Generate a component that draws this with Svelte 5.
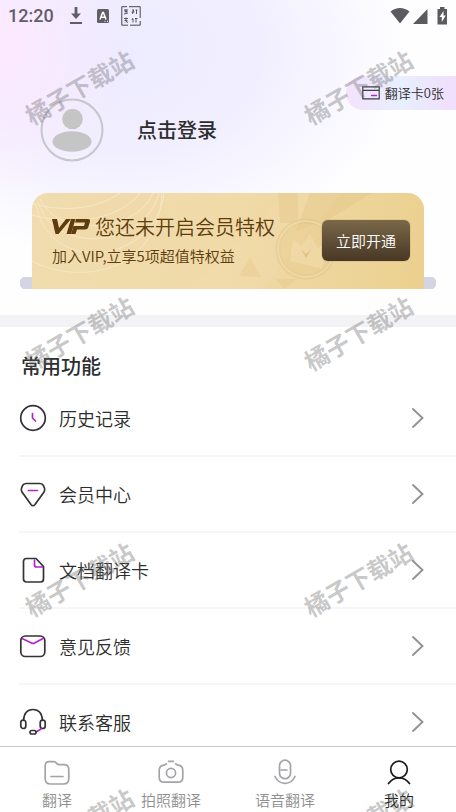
<script>
  const rows = [
    { id: 'history', label: '历史记录' },
    { id: 'member', label: '会员中心' },
    { id: 'document', label: '文档翻译卡' },
    { id: 'feedback', label: '意见反馈' },
    { id: 'service', label: '联系客服' }
  ];
  const tabs = [
    { id: 'translate', label: '翻译' },
    { id: 'photo', label: '拍照翻译' },
    { id: 'voice', label: '语音翻译' },
    { id: 'mine', label: '我的' }
  ];
  const marks = [0, 1, 2, 3, 4, 5, 6, 7];
  let active = $state('mine');
</script>

<div class="page">
  <main>
    <section class="top">
      <div class="status">
        <span class="time">12:20</span>
        <svg class="download" width="14" height="20" viewBox="0 0 14 20" aria-hidden="true">
          <path d="M7 1v9" stroke="#625d66" stroke-width="2.8" />
          <path d="M2 7.500h10L7 13z" fill="#625d66" />
          <path d="M1 17h12" stroke="#625d66" stroke-width="2" />
        </svg>
        <svg class="lang" width="12" height="14" viewBox="0 0 12 14" aria-hidden="true">
          <rect width="12" height="14" rx="1.500" fill="#625d66" />
          <path d="M3 10.500 5.600 3.500h.8L9 10.500M4 8.200h4" fill="none" stroke="#fff" stroke-width="1.500" />
          <path d="M7.500 12.300h1M10 12.300h1" stroke="#fff" stroke-width="1" />
        </svg>
        <svg class="seal" width="20" height="20" viewBox="0 0 20 20" fill="none" stroke="#4c4750" aria-hidden="true">
          <path d="M6 .7H.8v18.500H7M9 19.200h10.200V15M19.200 12V.7H8" stroke-width="1" />
          <path d="M3 4h4M5 3v4M3.500 5.500h3M3 8l4-1M11 4h2M10.500 6h3M12.500 4l-1 4M14.500 4h2M15.500 4v4M3 12.500h4M5 11.500v3M3.500 14.500h3M4 16.500l1-1 2 1M12 12l-1 2M12 13v3.500M14 12.500h2.500M15 12v4.500" stroke-width=".9" />
        </svg>
        <svg class="signals" width="58" height="18" viewBox="0 0 58 18" fill="#5c5a5e" aria-hidden="true">
          <path d="M.5 4.500C6-.2 14-.2 19.500 4.500L10 16.500z" />
          <path d="M37.500 2v15H23z" />
          <path fill-rule="evenodd" d="M50 0h4.500v2H57v15.500h-9.500V2H50zM53.500 4l-4 6h2.300v5l4-6.500h-2.300z" />
        </svg>
      </div>

      <div class="profile">
        <button class="login" type="button">
          <svg width="64" height="64" viewBox="0 0 64 64" aria-hidden="true">
            <circle cx="32" cy="32" r="30.500" fill="none" stroke="#c7c6ca" stroke-width="2" />
            <circle cx="32.500" cy="21" r="10.300" fill="#c5c5c6" />
            <ellipse cx="32" cy="43.500" rx="19.500" ry="10.300" fill="#c5c5c6" />
          </svg>
          <span>点击登录</span>
        </button>
        <button class="cards" type="button">
          <svg width="18" height="14" viewBox="0 0 18 14" fill="none" aria-hidden="true">
            <path d="M.8.8h16.400v12H.8zM.8 4.300h16.400" stroke="#403c46" stroke-width="1.200" />
            <path d="M9.500 9.500h5" stroke="#bb22d3" stroke-width="1.400" stroke-linecap="round" />
          </svg>
          <span>翻译卡0张</span>
        </button>
      </div>

      <div class="ledge">
        <div class="vip">
          <svg class="art" viewBox="0 0 392 96" preserveAspectRatio="xMidYMid slice" aria-hidden="true">
            <path d="M156 96 222 36 250 0h60L230 96z" fill="#f3ddb0" opacity=".35" />
            <path d="M278 0h62l-46 28-30 10zM246 0h20v30h-18z" fill="#dfc07d" opacity=".3" />
            <path d="M207 83 218 64 229 84zM244 86l8 10 14-10z" fill="#dfc07d" opacity=".25" />
            <circle cx="274" cy="56" r="28" fill="#e5c888" opacity=".35" stroke="#dbbb78" stroke-width="5" />
            <circle cx="274" cy="56" r="28" fill="none" stroke="#f6e4bd" stroke-width="2" opacity=".5" />
            <path d="M258 68l3-22 8 7 9-12 8 14 9-6-5 27z" fill="#f3dfb4" opacity=".5" />
            <path d="M269 56l5 5 6-6-6 10z" fill="#d9b974" opacity=".7" />
            <g fill="none" stroke="#f9edcf" stroke-width="1" opacity=".7">
              <path d="M0 10C30 20 65 16 88 0" />
              <path d="M0 22C45 35 90 24 108 0" />
              <path d="M8 6C25 45 105 40 121 0" />
              <path d="M6 8C20 62 112 57 127 0" />
              <path d="M4 12C18 84 124 70 132 0" />
              <path d="M0 68C45 92 126 82 130 0" />
            </g>
          </svg>
          <div class="copy">
            <div class="title">
              <svg width="38" height="16" viewBox="0 0 38 16" role="img" aria-label="VIP" fill="#5d3d0d">
                <path d="M0 0h5l2 9 7-9h5L6.500 15H3.500z" />
                <path d="M19 0h4.500l-4.500 15h-4.500z" />
                <path fill-rule="evenodd" d="M24 0h12q2.500 0 2 2.500l-1.500 5Q36 10.500 33 10.500h-8L23.500 15H19l2.500-8h10.500l1-3.500H23z" />
              </svg>
              <h1>您还未开启会员特权</h1>
            </div>
            <p>加入VIP,立享5项超值特权益</p>
          </div>
          <button class="open" type="button">立即开通</button>
        </div>
      </div>
    </section>

    <section class="features">
      <h2>常用功能</h2>
      <ul>
        {#each rows as row (row.id)}
          <li>
            <a href={`#${row.id}`}>
              <svg width="28" height="28" viewBox="0 0 28 28" fill="none" stroke="#343236" stroke-width="1.700" stroke-linecap="round" stroke-linejoin="round" aria-hidden="true">
                {#if row.id === 'history'}
                  <circle cx="14" cy="14" r="12.300" />
                  <path class="accent" d="M13.500 9.500V14l3 3" />
                {:else if row.id === 'member'}
                  <path d="M7 3.500h14q2.500 0 3.500 2.200l1 2.500q.8 2-.5 3.800L16 24.500q-2 2.500-4 0L3 12q-1.300-1.800-.5-3.800l1-2.500Q4.500 3.500 7 3.500z" />
                  <path class="accent" d="M9.500 10.500h9" />
                {:else if row.id === 'document'}
                  <path d="M7.500 2.500H17l7.500 8V23q0 3-3 3h-14q-3 0-3-3V5.500q0-3 3-3z" />
                  <path class="accent" d="M15.500 4v5q0 2 2 2h6" />
                {:else if row.id === 'feedback'}
                  <path class="accent" d="M3 6.500l9.500 4.500q1.500.8 3 0L24 6.500" />
                  <rect x="1.800" y="4" width="24" height="20.500" rx="4.500" />
                {:else}
                  <path d="M4.500 12.500C5 5 9 1.500 14 1.500S23 5 23.500 12.500" />
                  <rect x="1.800" y="12" width="5" height="8.500" rx="2.500" />
                  <rect x="21.200" y="12" width="5" height="8.500" rx="2.500" />
                  <path class="accent" d="M22 21l-5 3" />
                  <rect x="11" y="22.500" width="6" height="3.500" rx="1.700" />
                {/if}
              </svg>
              <span>{row.label}</span>
              <svg class="arrow" width="14" height="22" viewBox="0 0 14 22" fill="none" stroke="#929292" stroke-width="1.900" stroke-linecap="round" aria-hidden="true">
                <path d="M2 2l9.500 9L2 20" />
              </svg>
            </a>
          </li>
        {/each}
      </ul>
    </section>
  </main>

  <nav>
    {#each tabs as tab (tab.id)}
      <button type="button" class:active={active === tab.id} onclick={() => (active = tab.id)}>
        <svg width="28" height="28" viewBox="0 0 28 28" fill="none" stroke="currentColor" stroke-width="1.700" stroke-linecap="round" stroke-linejoin="round" aria-hidden="true">
          {#if tab.id === 'translate'}
            <path d="M6 2.700h4.500q2 0 3 1.500t3 1.500H21q4.800 0 4.800 4.800v9.300q0 5.200-5.200 5.200H7.400q-5.200 0-5.200-5.200V7q0-4.300 3.800-4.300z" />
            <path d="M8 17.500h12" />
          {:else if tab.id === 'photo'}
            <path d="M9.500 4.800 7 6.200Q2.200 6.600 2.200 11.500v6.700q0 5 5 5h13.600q5 0 5-5v-6.700q0-4.900-4.800-5.300l-2.500-1.400M11.500 2.300h5" />
            <circle cx="14" cy="14" r="4.600" />
          {:else if tab.id === 'voice'}
            <rect x="8.500" y="1.200" width="11" height="18.500" rx="5.500" />
            <path d="M10 11h6M4 17.500q3.200 6.800 10 6.800t10-6.800" />
          {:else}
            <circle cx="14" cy="10.500" r="8.300" />
            <path d="M3.500 24.500c3-4.200 6.500-5.700 10.500-5.700s7.500 1.500 10.500 5.700" />
          {/if}
        </svg>
        <span>{tab.label}</span>
      </button>
    {/each}
  </nav>

  <div class="marks" aria-hidden="true">
    {#each marks as mark (mark)}
      <span>橘子下载站</span>
    {/each}
  </div>
</div>

<style>
  .page {
    position: relative;
    display: flex;
    flex-direction: column;
    height: 100vh;
    overflow: hidden;
    background: #fff;
    color: #2d2d2d;
    font-family: "Noto Sans CJK SC", sans-serif;
    font-weight: 350;
  }
  button {
    margin: 0;
    padding: 0;
    border: 0;
    background: none;
    color: inherit;
    font-family: inherit;
    font-weight: inherit;
    cursor: pointer;
  }
  svg { flex: none; display: block; }
  h1, h2, p, ul { margin: 0; padding: 0; }
  main {
    flex: 1;
    min-height: 0;
    overflow-y: auto;
    scrollbar-width: none;
  }
  .top {
    padding-bottom: 26px;
    border-bottom: 12px solid #f3f3f6;
    background:
      radial-gradient(ellipse 130px 150px at 0 50px, #fce8ff 0%, #fce8ff00 100%),
      radial-gradient(ellipse 290px 210px at 120px 50px, #edebff 0%, #f0eeff 45%, #f5f4ff00 100%),
      #fefeff;
  }
  .status {
    display: flex;
    align-items: center;
    height: 32px;
    padding: 0 8px;
    color: #625d66;
  }
  .time {
    font: 500 18px/32px Roboto, sans-serif;
  }
  .download { margin-left: 15px; }
  .lang { margin-left: 14px; }
  .seal { margin-left: 12px; }
  .signals { margin-left: auto; }
  .profile {
    display: flex;
    align-items: flex-start;
    justify-content: space-between;
    height: 117px;
    padding-top: 44px;
  }
  .login {
    display: flex;
    align-items: center;
    gap: 33px;
    margin: 22px 0 0 40px;
    font-size: 20px;
    font-weight: 500;
    line-height: 28px;
  }
  .cards {
    display: flex;
    align-items: center;
    gap: 5px;
    height: 34px;
    padding: 0 12px 0 16px;
    border-radius: 17px 0 0 17px;
    background: linear-gradient(90deg, #f4e2fd, #e8effd 50%, #f0defd);
    font-size: 13px;
    line-height: 20px;
  }
  .ledge {
    padding: 0 12px;
    margin: 0 20px;
    background:
      radial-gradient(circle at 6px 6px, #d4d4e2 6px, transparent 7px) left bottom / 12px 12px no-repeat,
      radial-gradient(circle at 6px 6px, #d4d4e2 6px, transparent 7px) right bottom / 12px 12px no-repeat,
      linear-gradient(#d4d4e2, #d4d4e2) center bottom / calc(100% - 12px) 12px no-repeat;
  }
  .vip {
    position: relative;
    display: flex;
    align-items: center;
    justify-content: space-between;
    height: 96px;
    box-sizing: border-box;
    padding: 0 14px 2px 20px;
    border-radius: 16px 16px 0 0;
    background: linear-gradient(100deg, #f0dcae, #f0daa8 50%, #ebd08f);
    color: #5d3d0d;
    overflow: hidden;
  }
  .art {
    position: absolute;
    inset: 0;
    width: 100%;
    height: 100%;
  }
  .copy { position: relative; }
  .title {
    display: flex;
    align-items: center;
    gap: 5px;
  }
  h1 {
    font-size: 20px;
    font-weight: inherit;
    line-height: 32px;
    white-space: nowrap;
  }
  p {
    font-size: 15px;
    line-height: 26px;
    white-space: nowrap;
  }
  .open {
    position: relative;
    width: 88px;
    height: 41px;
    border-radius: 6px;
    background: linear-gradient(#7a6848, #483725);
    box-shadow: 0 0 1px #6b5836;
    color: #fff;
    font-size: 15px;
  }
  .features { padding-top: 24px; }
  h2 {
    padding-left: 21px;
    font-size: 20px;
    font-weight: 500;
    line-height: 30px;
  }
  ul { list-style: none; }
  li {
    margin-left: 19px;
    border-bottom: 2px solid #f5f5fa;
  }
  a {
    display: flex;
    align-items: center;
    height: 74px;
    padding-right: 31px;
    color: inherit;
    text-decoration: none;
    font-size: 18px;
    line-height: 26px;
  }
  a span {
    flex: 1;
    padding-left: 12px;
  }
  .accent { stroke: #b323cc; }
  nav {
    display: flex;
    height: 65px;
    flex: none;
    border-top: 1px solid #c9c9c9;
    background: #fff;
  }
  nav button {
    flex: 1;
    display: flex;
    flex-direction: column;
    align-items: center;
    padding-top: 12px;
    color: #a4a3a8;
    font-size: 15px;
    line-height: 26px;
  }
  nav button span { color: #8f8f8f; }
  nav .active, nav .active span { color: #1c1c1c; }
  .marks {
    position: absolute;
    inset: 0;
    display: grid;
    grid-template-columns: 279px 279px;
    grid-auto-rows: 246px;
    padding: 70px 0 0 19px;
    overflow: hidden;
    pointer-events: none;
    color: rgba(100, 100, 100, 0.36);
    font-size: 24px;
    font-weight: 700;
    line-height: 34px;
  }
  .marks span {
    justify-self: start;
    align-self: start;
    transform: rotate(-30deg);
    white-space: nowrap;
  }
</style>
